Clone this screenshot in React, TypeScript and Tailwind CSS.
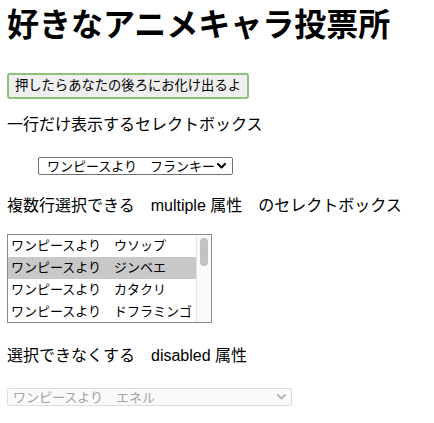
import React from "react";

const jp = { fontFamily: '"Liberation Sans", "Noto Sans CJK JP", sans-serif' };

function Chevron({ color, w = 9 }: { color: string; w?: number }) {
  return (
    <svg width={w} height={6} viewBox="0 0 9 6" className="shrink-0">
      <path d="M1 1 L4.5 4.5 L8 1" fill="none" stroke={color} strokeWidth={2} strokeLinecap="round" strokeLinejoin="round" />
    </svg>
  );
}

const rows = [
  { t: "ワンピースより　ウソップ", sel: false },
  { t: "ワンピースより　ジンベエ", sel: true },
  { t: "ワンピースより　カタクリ", sel: false },
  { t: "ワンピースより　ドフラミンゴ", sel: false },
];

export default function App() {
  return (
    <div className="bg-white w-[434px] h-[423px] px-[7px] text-black overflow-hidden" style={jp}>
      <h1 className="mt-[7px] h-[36px] leading-[36px] text-[32px] font-bold whitespace-nowrap">
        好きなアニメキャラ投票所
      </h1>
      <button className="mt-[30px] flex h-[26px] w-[242px] items-center justify-center rounded-[3px] border-2 border-[#8cc27a] bg-[#efefef] text-[13.3px] leading-none whitespace-nowrap">
        押したらあなたの後ろにお化け出るよ
      </button>
      <p className="mt-[14px] h-[24px] leading-[24px] text-[16px] whitespace-nowrap">
        一行だけ表示するセレクトボックス
      </p>
      <div className="mt-[20px] ml-[31px] flex h-[18px] w-[195px] items-center justify-between rounded-[2px] border border-[#6f6f6f] bg-white pl-[8px] pr-[6px]">
        <span className="text-[13px] leading-none whitespace-nowrap">ワンピースより　フランキー</span>
        <Chevron color="#000" />
      </div>
      <p className="mt-[19px] h-[24px] leading-[24px] text-[16px] whitespace-nowrap">
        複数行選択できる　multiple 属性　のセレクトボックス
      </p>
      <div className="mt-[16px] flex h-[89px] w-[205px] border border-[#8a8a8a] bg-white">
        <div className="flex flex-1 flex-col">
          {rows.map((r) => (
            <div
              key={r.t}
              className={`flex h-[21.75px] items-center pl-[3px] text-[13px] leading-none whitespace-nowrap ${r.sel ? "bg-[#c8c8c8]" : ""}`}
            >
              {r.t}
            </div>
          ))}
        </div>
        <div className="flex w-[15px] justify-center border-l border-[#e4e4e4] bg-[#fafafa] pt-[3px]">
          <div className="h-[28px] w-[8px] rounded-full bg-[#c2c2c2]" />
        </div>
      </div>
      <p className="mt-[21px] h-[24px] leading-[24px] text-[16px] whitespace-nowrap">
        選択できなくする　disabled 属性
      </p>
      <div className="mt-[20px] flex h-[18px] w-[285px] items-center justify-between rounded-[2px] border border-[#dcdcdc] bg-[#fafafa] pl-[5px] pr-[5px]">
        <span className="text-[13px] leading-none whitespace-nowrap text-[#a3a3a3]">ワンピースより　エネル</span>
        <Chevron color="#b5b5b5" />
      </div>
    </div>
  );
}
